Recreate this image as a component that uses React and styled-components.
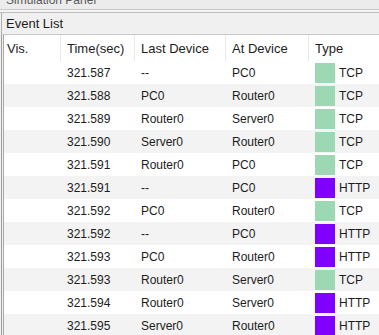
import React from 'react'
import styled, { createGlobalStyle } from 'styled-components'

const events = [
    ['321.587', '--', 'PC0', 'TCP'],
    ['321.588', 'PC0', 'Router0', 'TCP'],
    ['321.589', 'Router0', 'Server0', 'TCP'],
    ['321.590', 'Server0', 'Router0', 'TCP'],
    ['321.591', 'Router0', 'PC0', 'TCP'],
    ['321.591', '--', 'PC0', 'HTTP'],
    ['321.592', 'PC0', 'Router0', 'TCP'],
    ['321.592', '--', 'PC0', 'HTTP'],
    ['321.593', 'PC0', 'Router0', 'HTTP'],
    ['321.593', 'Router0', 'Server0', 'TCP'],
    ['321.594', 'Router0', 'Server0', 'HTTP'],
    ['321.595', 'Server0', 'Router0', 'HTTP'],
]

const typeColors = {
    TCP: '#9dd8b4',
    HTTP: '#8000ff',
}

const columns = '57px 74px 91px 83px 1fr'

export default function App() {
    return (
        <>
            <GlobalStyle />
            <Panel>
                <TitleBar>
                    <span>Simulation Panel</span>
                </TitleBar>
                <Divider />
                <SectionBar>Event List</SectionBar>
                <Table>
                    <HeaderRow>
                        <HeaderCell first>Vis.</HeaderCell>
                        <HeaderCell>Time(sec)</HeaderCell>
                        <HeaderCell>Last Device</HeaderCell>
                        <HeaderCell>At Device</HeaderCell>
                        <HeaderCell>Type</HeaderCell>
                    </HeaderRow>
                    {events.map(([time, last, at, type], i) => (
                        <Row key={i} striped={i % 2 === 1}>
                            <Cell first />
                            <Cell>{time}</Cell>
                            <Cell>{last}</Cell>
                            <Cell>{at}</Cell>
                            <TypeCell>
                                <Swatch color={typeColors[type]} />
                                {type}
                            </TypeCell>
                        </Row>
                    ))}
                </Table>
            </Panel>
        </>
    )
}

const GlobalStyle = createGlobalStyle`
    html, body {
        margin: 0;
        padding: 0;
        background: #f0f0f0;
        overflow: hidden;
    }
    body {
        font-family: "Liberation Sans", Arial, sans-serif;
        color: #1c1c1c;
    }
`

const Panel = styled.div`
    width: 379px;
    height: 335px;
    overflow: hidden;
    background: #f0f0f0;
`

const TitleBar = styled.div`
    height: 9px;
    overflow: hidden;
    display: flex;
    align-items: flex-end;
    background: #ececec;
    padding-left: 6px;
    span {
        font-size: 12px;
        line-height: 13px;
        margin-bottom: 2px;
        color: #5a5a5a;
    }
`

const Divider = styled.div`
    height: 2px;
    border-top: 1px solid #c9c9c9;
    border-bottom: 1px solid #bdbdbd;
    background: #f4f4f4;
`

const SectionBar = styled.div`
    height: 21px;
    line-height: 21px;
    font-size: 13px;
    padding-left: 4px;
    border-left: 1px solid #b0b0b0;
    border-bottom: 1px solid #c8c8c8;
    background: #f0f0f0;
    margin-left: 1px;
`

const Table = styled.div`
    margin-left: 1px;
    border-left: 1px solid #9e9e9e;
    padding-left: 1px;
    background: #f0f0f0;
    height: 100%;
    > div {
        border-left: 1px solid #a8a8a8;
    }
`

const HeaderRow = styled.div`
    display: grid;
    grid-template-columns: ${columns};
    height: 26px;
    background: #ffffff;
`

const HeaderCell = styled.div`
    display: flex;
    align-items: center;
    font-size: 13px;
    padding-left: ${({ first }) => (first ? '3px' : '6px')};
    border-right: 1px solid #e8e8e8;
    &:last-child {
        border-right: none;
    }
`

const Row = styled.div`
    display: grid;
    grid-template-columns: ${columns};
    height: 23px;
    background: ${({ striped }) => (striped ? '#f3f3f3' : '#ffffff')};
`

const Cell = styled.div`
    display: flex;
    align-items: center;
    font-size: 12px;
    padding-left: ${({ first }) => (first ? '3px' : '6px')};
    white-space: nowrap;
`

const TypeCell = styled(Cell)`
    gap: 4px;
    padding-left: 6px;
`

const Swatch = styled.span`
    width: 20px;
    height: 20px;
    background: ${({ color }) => color};
`
